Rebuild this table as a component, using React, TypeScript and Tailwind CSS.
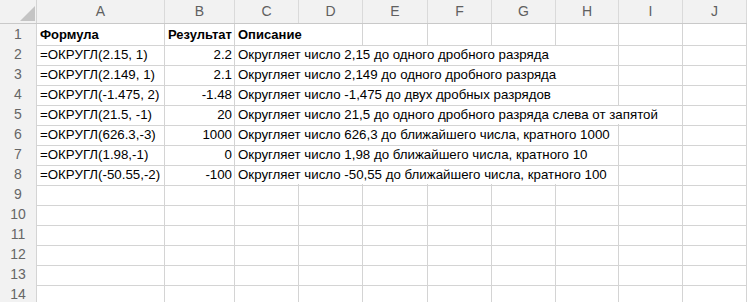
import React from 'react';

const cols = ['A', 'B', 'C', 'D', 'E', 'F', 'G', 'H', 'I', 'J'];

// formula, result, description, how many columns the description overflows into
const data: [string, string, string, number][] = [
  ['=ОКРУГЛ(2.15, 1)', '2.2', 'Округляет число 2,15 до одного дробного разряда', 6],
  ['=ОКРУГЛ(2.149, 1)', '2.1', 'Округляет число 2,149 до одного дробного разряда', 6],
  ['=ОКРУГЛ(-1.475, 2)', '-1.48', 'Округляет число -1,475 до двух дробных разрядов', 6],
  ['=ОКРУГЛ(21.5, -1)', '20', 'Округляет число 21,5 до одного дробного разряда слева от запятой', 7],
  ['=ОКРУГЛ(626.3,-3)', '1000', 'Округляет число 626,3 до ближайшего числа, кратного 1000', 6],
  ['=ОКРУГЛ(1.98,-1)', '0', 'Округляет число 1,98 до ближайшего числа, кратного 10', 6],
  ['=ОКРУГЛ(-50.55,-2)', '-100', 'Округляет число -50,55 до ближайшего числа, кратного 100', 6],
];

const spanClass: Record<number, string> = {
  1: 'col-span-1',
  2: 'col-span-2',
  6: 'col-span-6',
  7: 'col-span-7',
};

const gridCols = 'grid grid-cols-[37px_128px_70px_64px_64px_65px_64px_64px_63px_64px_64px]';
const cell = 'flex items-center border-r border-b border-[#d4d4d4] overflow-hidden whitespace-nowrap';

const RowHead = ({ n }: { n: number }) => (
  <div className="flex items-center justify-center bg-[#f2f2f2] border-r border-b border-[#d4d4d4] text-[14px] text-[#666]">
    {n}
  </div>
);

export default function App() {
  const rows = Array.from({ length: 14 }, (_, i) => i + 1);

  return (
    <div className="w-[747px] h-[302px] overflow-hidden bg-white font-['Liberation_Sans',Arial,sans-serif] text-[13.3px] text-black">
      {/* column header */}
      <div className={`${gridCols} h-[24px] bg-[#f2f2f2] border-b border-[#c9c9c9]`}>
        <div className="relative border-r border-[#d4d4d4]">
          <svg className="absolute left-[20px] top-[6px]" width="15" height="15" viewBox="0 0 15 15">
            <polygon points="15,0 15,15 0,15" fill="#c4c4c4" />
          </svg>
        </div>
        {cols.map((c) => (
          <div key={c} className="flex items-center justify-center border-r border-[#dadada] text-[14px] text-[#606060]">
            {c}
          </div>
        ))}
      </div>

      {rows.map((r) => {
        const row = r >= 2 && r <= 8 ? data[r - 2] : null;

        if (r === 1) {
          return (
            <div key={r} className={`${gridCols} h-[20px]`}>
              <RowHead n={r} />
              <div className={`${cell} pl-[3px] font-bold text-[13px]`}>Формула</div>
              <div className={`${cell} pl-[3px] font-bold text-[13px]`}>Результат</div>
              <div className={`${cell} col-span-2 pl-[3px] font-bold text-[13px]`}>Описание</div>
              {Array.from({ length: 6 }, (_, i) => (
                <div key={i} className={cell} />
              ))}
            </div>
          );
        }

        if (row) {
          const [formula, result, desc, span] = row;
          return (
            <div key={r} className={`${gridCols} h-[20px]`}>
              <RowHead n={r} />
              <div className={`${cell} pl-[3px]`}>{formula}</div>
              <div className={`${cell} justify-end pr-[2px]`}>{result}</div>
              <div className={`${cell} ${spanClass[span]} pl-[3px]`}>{desc}</div>
              {Array.from({ length: 8 - span }, (_, i) => (
                <div key={i} className={cell} />
              ))}
            </div>
          );
        }

        return (
          <div key={r} className={`${gridCols} h-[20px]`}>
            <RowHead n={r} />
            {cols.map((c) => (
              <div key={c} className={cell} />
            ))}
          </div>
        );
      })}
    </div>
  );
}
